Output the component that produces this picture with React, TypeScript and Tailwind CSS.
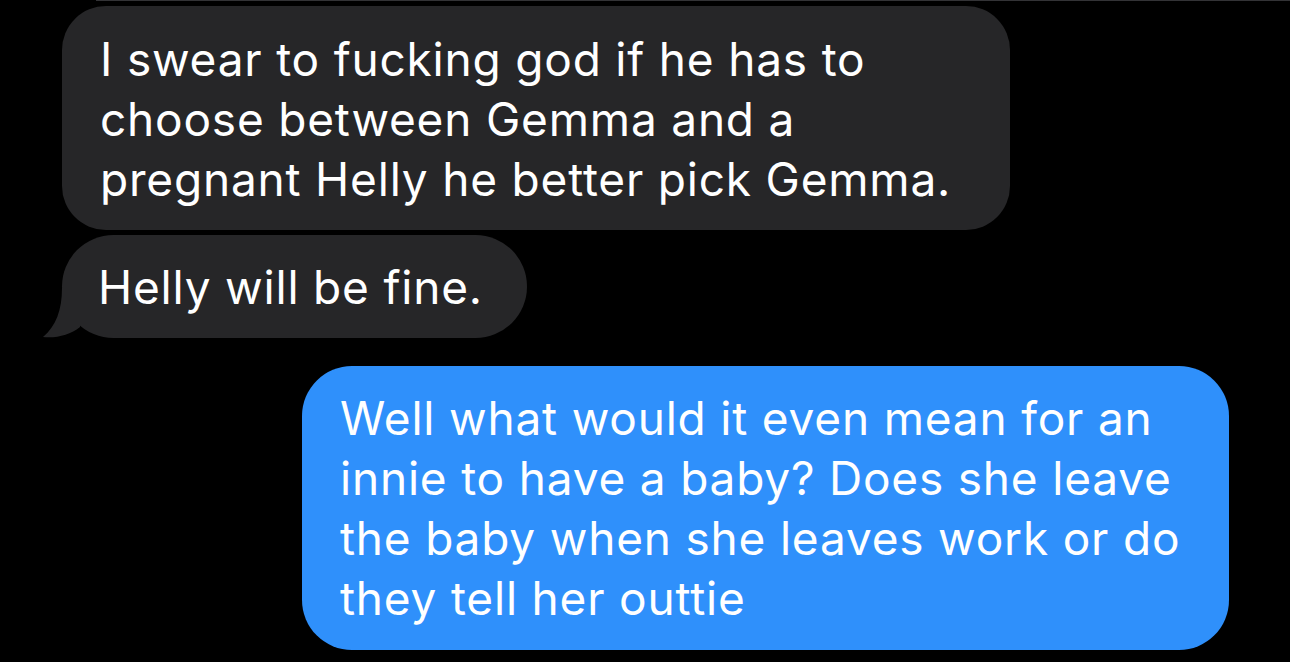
export default function App() {
  return (
    <div
      className="relative h-[662px] w-[1290px] overflow-hidden bg-black text-white"
      style={{ fontFamily: 'Inter, "Noto Sans", sans-serif' }}
    >
      {/* edge of the previous message, cut off at the top */}
      <div className="ml-[96px] h-px bg-[#333336]" />

      <div className="flex flex-col">
        <div className="ml-[62px] mt-[5px] w-[948px] rounded-[44px] bg-[#262628] pl-[38px] pt-[23px] pb-[21px] text-[46px] leading-[60px] tracking-[0.8px] whitespace-nowrap">
          I swear to fucking god if he has to
          <br />
          choose between Gemma and a
          <br />
          pregnant Helly he better pick Gemma.
        </div>

        <div className="relative ml-[62px] mt-[5px] w-[465px] rounded-[52px] bg-[#262628] pl-[36px] pt-[22px] pb-[21px] text-[46px] leading-[60px] tracking-[0.8px] whitespace-nowrap">
          Helly will be fine.
          <svg
            className="absolute left-[-20px] bottom-0"
            width="50"
            height="50"
            viewBox="0 0 50 50"
          >
            <path d="M20 0 C20 22 14 38 1 49 C14 50.5 28 47 38 39 L38 0 Z" fill="#262628" />
          </svg>
        </div>

        <div className="ml-[302px] mt-[28px] w-[927px] rounded-[50px] bg-[#2f90fb] pl-[38px] pt-[22px] pb-[22px] text-[46px] leading-[60px] tracking-[0.8px] whitespace-nowrap">
          Well what would it even mean for an
          <br />
          innie to have a baby? Does she leave
          <br />
          the baby when she leaves work or do
          <br />
          they tell her outtie
        </div>
      </div>
    </div>
  );
}
